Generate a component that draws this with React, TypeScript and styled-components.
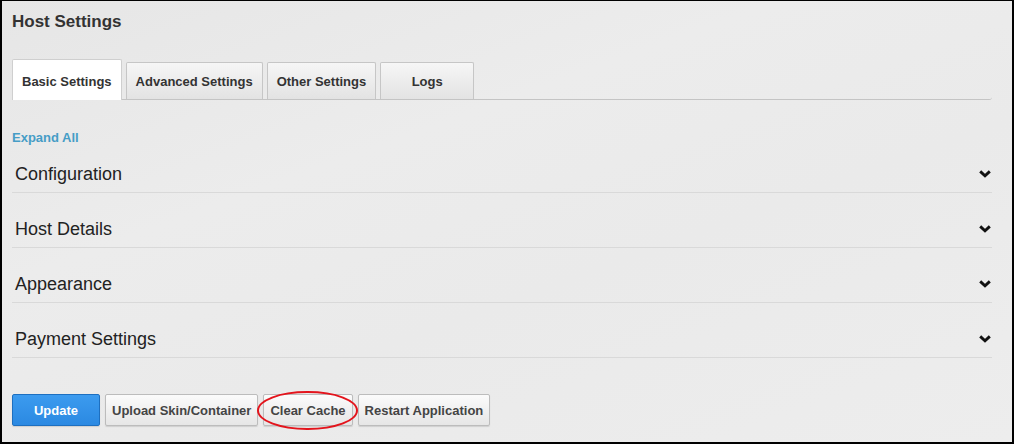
import React from "react";
import styled, { createGlobalStyle } from "styled-components";

const GlobalStyle = createGlobalStyle`
  html, body { margin: 0; padding: 0; }
  body { font-family: "Liberation Sans", Arial, sans-serif; background: #ebebeb; }
  * { box-sizing: border-box; }
`;

const Page = styled.div`
  height: 444px;
  border-style: solid;
  border-color: #000;
  border-width: 1px 2px 2px 2px;
  padding: 10px 20px 0 10px;
  background: linear-gradient(160deg, #e6e6e6 0%, #ececec 35%, #eaeaea 60%, #ededed 100%);
  display: flex;
  flex-direction: column;
`;

const Title = styled.h1`
  margin: 0;
  font-size: 17px;
  line-height: 21px;
  font-weight: bold;
  color: #333;
`;

const TabBar = styled.div`
  margin-top: 27px;
  display: flex;
  align-items: flex-end;
  gap: 4px;
  border-bottom: 1px solid #c4c4c4;
  border-bottom-right-radius: 3px;
  height: 41px;
`;

const Tab = styled.div<{ $active?: boolean }>`
  min-width: 94px;
  padding: 0 9px;
  display: flex;
  align-items: center;
  justify-content: center;
  font-size: 13px;
  font-weight: bold;
  color: #333;
  border: 1px solid ${(p) => (p.$active ? "#cfcfcf" : "#c6c6c6")};
  border-bottom: none;
  border-radius: 2px 2px 0 0;
  height: ${(p) => (p.$active ? "41px" : "37px")};
  margin-bottom: ${(p) => (p.$active ? "-1px" : "0")};
  padding-top: ${(p) => (p.$active ? "3px" : "0")};
  background: ${(p) =>
    p.$active ? "#fff" : "linear-gradient(#f6f6f6, #e3e3e3)"};
`;

const ExpandRow = styled.div`
  padding-top: 30px;
  font-size: 13px;
  line-height: 16px;
`;

const ExpandLink = styled.a`
  font-size: 13px;
  font-weight: bold;
  color: #469dc6;
  text-decoration: none;
  cursor: pointer;
`;

const Sections = styled.div`
  display: flex;
  flex-direction: column;
`;

const SectionRow = styled.div`
  display: flex;
  align-items: center;
  justify-content: space-between;
  padding: 26px 1px 8px 3px;
  height: 55px;
  line-height: 20px;
  border-bottom: 1px solid #d9d9d9;
  &:first-child { padding-top: 18px; height: 47px; }
`;

const SectionTitle = styled.span`
  font-size: 18px;
  color: #222;
`;

const Chevron = () => (
  <svg width="12" height="8" viewBox="0 0 12 8">
    <polyline
      points="1.2,1.4 6,5.8 10.8,1.4"
      fill="none"
      stroke="#111"
      strokeWidth="2.9"
      strokeLinejoin="miter"
    />
  </svg>
);

const ButtonBar = styled.div`
  margin-top: 36px;
  display: flex;
  gap: 5px;
`;

const Button = styled.button<{ $primary?: boolean }>`
  height: 32px;
  min-width: ${(p) => (p.$primary ? "88px" : "0")};
  padding: 0 6px;
  font-family: "Liberation Sans", Arial, sans-serif;
  font-size: 13px;
  font-weight: bold;
  border-radius: 2px;
  cursor: pointer;
  color: ${(p) => (p.$primary ? "#fff" : "#444")};
  border: 1px solid ${(p) => (p.$primary ? "#1d6fc0" : "#bcbcbc")};
  background: ${(p) =>
    p.$primary
      ? "linear-gradient(#3c9bef, #2b89e2)"
      : "linear-gradient(#fbfbfb, #e6e6e6)"};
  box-shadow: 0 1px 1px rgba(0, 0, 0, 0.12);
`;

const Highlight = styled.div`
  position: relative;
  display: flex;
`;

const Ellipse = styled.span`
  position: absolute;
  top: -3px;
  bottom: -4px;
  left: -6px;
  right: -5px;
  border: 2px solid #e3141c;
  border-radius: 50%;
  pointer-events: none;
`;

const sections = ["Configuration", "Host Details", "Appearance", "Payment Settings"];

export default function App() {
  return (
    <>
      <GlobalStyle />
      <Page>
        <Title>Host Settings</Title>
        <TabBar>
          <Tab $active>Basic Settings</Tab>
          <Tab>Advanced Settings</Tab>
          <Tab>Other Settings</Tab>
          <Tab>Logs</Tab>
        </TabBar>
        <ExpandRow>
          <ExpandLink>Expand All</ExpandLink>
        </ExpandRow>
        <Sections>
          {sections.map((s) => (
            <SectionRow key={s}>
              <SectionTitle>{s}</SectionTitle>
              <Chevron />
            </SectionRow>
          ))}
        </Sections>
        <ButtonBar>
          <Button $primary>Update</Button>
          <Button>Upload Skin/Container</Button>
          <Highlight>
            <Button>Clear Cache</Button>
            <Ellipse />
          </Highlight>
          <Button>Restart Application</Button>
        </ButtonBar>
      </Page>
    </>
  );
}
